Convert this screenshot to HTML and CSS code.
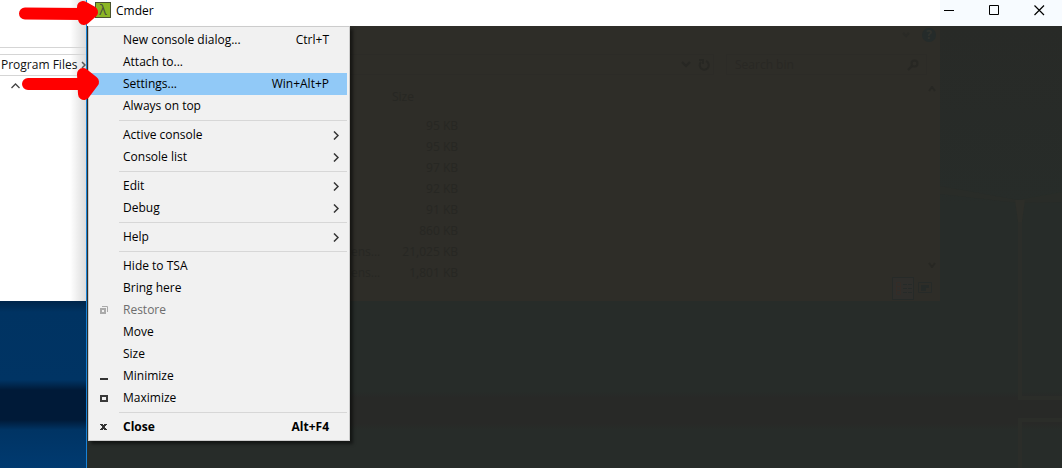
FILE: index.html
```html
<!DOCTYPE html>
<html lang="en">
<head>
<meta charset="UTF-8">
<meta name="viewport" content="width=device-width, initial-scale=1.0">
<title>Cmder</title>
<link rel="stylesheet" href="styles.css">
</head>
<body>
<div class="desktop">
	<div class="side">
		<div class="explorer">
			<div class="ribbon"></div>
			<div class="gap-bar"></div>
			<div class="path">
				<a href="#">Program Files</a>
				<svg width="5" height="8" viewBox="0 0 5 8"><path d="M1 1l3 3-3 3" fill="none" stroke="#555" stroke-width="1.500"/></svg>
			</div>
			<div class="sort">
				<svg width="9" height="6" viewBox="0 0 9 6"><path d="M.5 5l4-4 4 4" fill="none" stroke="#444" stroke-width="1.300"/></svg>
			</div>
		</div>
	</div>

	<div class="window">
		<header class="titlebar">
			<span class="logo">λ</span>
			<span class="name">Cmder</span>
			<div class="controls">
				<button type="button" aria-label="Minimize"><svg width="11" height="11"><path d="M0 5.500h10" stroke="#000"/></svg></button>
				<button type="button" aria-label="Maximize"><svg width="11" height="11"><path d="M.5 .5h9v9h-9z" fill="none" stroke="#000"/></svg></button>
				<button type="button" aria-label="Close"><svg width="11" height="11"><path d="M.5 .5l9.500 9.500M10 .5L.5 10" stroke="#000" stroke-width="1.200"/></svg></button>
			</div>
		</header>

		<main class="console">
			<!-- explorer window showing through the console -->
			<div class="ghost">
				<div class="ghost-top">
					<svg width="8" height="6" viewBox="0 0 8 6"><path d="M1 1l3 3 3-3" fill="none" stroke="#2a2a26" stroke-width="2"/></svg>
					<span class="help">?</span>
				</div>
				<div class="ghost-bar">
					<div class="address">
						<svg width="10" height="7" viewBox="0 0 10 7"><path d="M1 1l4 4 4-4" fill="none" stroke="#272723" stroke-width="2"/></svg>
						<svg width="12" height="12" viewBox="0 0 12 12"><path d="M8 2a4.500 4.500 0 1 1-5 1M1 1h4v4" fill="none" stroke="#272723" stroke-width="2"/></svg>
					</div>
					<div class="search">
						<input type="text" placeholder="Search bin" aria-label="Search bin">
						<svg width="12" height="12" viewBox="0 0 12 12"><circle cx="7.500" cy="4.500" r="3" fill="none" stroke="#272723" stroke-width="2"/><path d="M5 7l-4 4" stroke="#272723" stroke-width="2"/></svg>
					</div>
				</div>
				<div class="ghost-files">
					<table>
						<thead><tr><th></th><th class="size-head">Size</th></tr></thead>
						<tbody>
							<tr><td></td><td>95 KB</td></tr>
							<tr><td></td><td>95 KB</td></tr>
							<tr><td></td><td>97 KB</td></tr>
							<tr><td></td><td>92 KB</td></tr>
							<tr><td></td><td>91 KB</td></tr>
							<tr><td></td><td>860 KB</td></tr>
							<tr><td>ens...</td><td>21,025 KB</td></tr>
							<tr><td>ens...</td><td>1,801 KB</td></tr>
						</tbody>
					</table>
					<div class="scroll">
						<svg width="8" height="6" viewBox="0 0 8 6"><path d="M1 5l3-4 3 4" fill="none" stroke="#272723" stroke-width="2"/></svg>
						<svg width="8" height="6" viewBox="0 0 8 6"><path d="M1 1l3 4 3-4" fill="none" stroke="#272723" stroke-width="2"/></svg>
					</div>
				</div>
				<div class="views">
					<svg width="40" height="23" viewBox="0 0 40 23" fill="none">
						<path d="M.5 .5h21v22H.5z" fill="#2f2e2b" stroke="#262a28"/>
						<path d="M4.500 5.500h4v12h-4zM4.500 9.500h4M4.500 13.500h4" stroke="#352c27"/>
						<path d="M11 7.500h9M11 11.500h9M11 15.500h9" stroke="#262a28" stroke-dasharray="4 1"/>
						<path d="M26.500 5.500h13v10h-13z" stroke="#262a28"/>
						<path d="M29 8h8v3h-3v3h-5z" fill="#262a28"/>
					</svg>
				</div>
			</div>
			<svg class="wallpaper" width="122" height="442" viewBox="0 0 122 442">
				<path d="M0 160l78 14 44-8v10l-44 1L0 168z" fill="#292c28"/>
				<path d="M80 178v194h42M80 442v-48h42" fill="none" stroke="#2b2d29" stroke-width="4"/>
				<path d="M75 174h10l-3 22h-4z" fill="#2d2e29"/>
			</svg>
		</main>

		<ul class="menu">
			<li><button type="button"><i></i><span>New console dialog...</span><kbd>Ctrl+T</kbd></button></li>
			<li><button type="button"><i></i><span>Attach to...</span></button></li>
			<li><button type="button" class="active"><i></i><span>Settings...</span><kbd>Win+Alt+P</kbd></button></li>
			<li><button type="button"><i></i><span>Always on top</span></button></li>
			<li class="line"></li>
			<li><button type="button"><i></i><span>Active console</span><svg class="more" width="6" height="9"><path d="M1 .5l4 4-4 4"/></svg></button></li>
			<li><button type="button"><i></i><span>Console list</span><svg class="more" width="6" height="9"><path d="M1 .5l4 4-4 4"/></svg></button></li>
			<li class="line"></li>
			<li><button type="button"><i></i><span>Edit</span><svg class="more" width="6" height="9"><path d="M1 .5l4 4-4 4"/></svg></button></li>
			<li><button type="button"><i></i><span>Debug</span><svg class="more" width="6" height="9"><path d="M1 .5l4 4-4 4"/></svg></button></li>
			<li class="line"></li>
			<li><button type="button"><i></i><span>Help</span><svg class="more" width="6" height="9"><path d="M1 .5l4 4-4 4"/></svg></button></li>
			<li class="line"></li>
			<li><button type="button"><i></i><span>Hide to TSA</span></button></li>
			<li><button type="button"><i></i><span>Bring here</span></button></li>
			<li><button type="button" disabled><i><svg width="8" height="8"><path d="M1 3h4v4H1z" fill="none" stroke="#aaa" stroke-width="2"/><path d="M2 .5h5.500V6" fill="none" stroke="#aaa"/></svg></i><span>Restore</span></button></li>
			<li><button type="button"><i></i><span>Move</span></button></li>
			<li><button type="button"><i></i><span>Size</span></button></li>
			<li><button type="button"><i><svg width="8" height="8"><path d="M0 7h8" stroke="#333" stroke-width="2"/></svg></i><span>Minimize</span></button></li>
			<li><button type="button"><i><svg width="8" height="8"><path d="M1 2h6v5H1z" fill="none" stroke="#3a3a3a" stroke-width="2"/></svg></i><span>Maximize</span></button></li>
			<li class="line"></li>
			<li><button type="button" class="close"><i><svg width="8" height="8"><path d="M0 1h3v1h1V1h3v1H6v1H5v2h1v1h1v1H4V6H3v1H0V6h1V5h1V3H1V2H0z" fill="#333"/></svg></i><span>Close</span><kbd>Alt+F4</kbd></button></li>
		</ul>
	</div>

	<!-- hand drawn pointers -->
	<svg class="arrows" width="110" height="110" viewBox="0 0 110 110">
		<path d="M25 13.500L82 14M83 7l9 5-8 7z"/>
		<path d="M28 84h55M83 74l10 8-9 12z"/>
	</svg>
</div>
</body>
</html>
```
FILE: styles.css
```css
* {
	box-sizing: border-box;
}
body {
	margin: 0;
	font-family: "Open Sans", "Noto Sans", sans-serif;
	font-size: 12px;
	color: #000;
}
svg {
	display: block;
	flex: none;
}
button {
	border: 0;
	padding: 0;
	background: none;
	font: inherit;
	color: inherit;
}
.desktop {
	position: relative;
	display: grid;
	grid-template-columns: 86px 1fr;
	min-height: 100vh;
	overflow: hidden;
}

/* left part: explorer and wallpaper */
.side {
	background: linear-gradient(#00254a 301px, #003362 312px, #003464 380px, #001a38 390px, #001a38 420px, #003464 430px, #003a70);
}
.explorer {
	height: 301px;
	background: linear-gradient(to right, transparent 70px, rgba(0, 0, 0, 0.14)), #fff;
}
.ribbon {
	height: 48px;
	border-bottom: 1px solid #d5d5d5;
}
.gap-bar {
	height: 7px;
	border-bottom: 1px solid #d5d5d5;
}
.path {
	display: flex;
	align-items: center;
	justify-content: space-between;
	height: 21px;
	padding-left: 1px;
	border-bottom: 1px solid #d5d5d5;
	white-space: nowrap;
}
.path a {
	padding-bottom: 1px;
	color: #111;
	text-decoration: none;
}
.sort {
	padding: 7px 11px;
}

/* main window */
.window {
	position: relative;
	display: flex;
	flex-direction: column;
	border-left: 1px solid #1883d7;
}
.titlebar {
	display: flex;
	align-items: center;
	height: 26px;
	padding-left: 8px;
	background: linear-gradient(to left, #f7fbff 122px, #fff 122px);
}
.logo {
	width: 16px;
	height: 16px;
	margin-bottom: 6px;
	border: 1px solid #4a5230;
	background: #8cb524;
	color: #484d40;
	font-size: 14px;
	line-height: 14px;
	text-align: center;
}
.name {
	margin: 0 auto 5px 5px;
}
.controls {
	display: flex;
}
.controls button {
	display: flex;
	justify-content: center;
	width: 45px;
	padding-bottom: 6px;
}

.console {
	flex: 1;
	display: flex;
	align-items: flex-start;
	background: linear-gradient(#282a27, #272c29 180px, #272c29 366px, #282927 372px, #282927 398px, #272c29 404px);
}
.ghost {
	flex: 1;
	height: 275px;
	background: #2e2d28;
	color: #272723;
}
.ghost-top {
	display: flex;
	align-items: center;
	justify-content: flex-end;
	gap: 12px;
	height: 28px;
	padding: 0 4px 10px 0;
}
.help {
	width: 14px;
	height: 14px;
	border-radius: 50%;
	background: #252b2a;
	color: #31332e;
	font-weight: bold;
	line-height: 14px;
	text-align: center;
}
.ghost-bar {
	display: flex;
	gap: 12px;
	height: 21px;
	padding-right: 13px;
}
.address {
	flex: 1;
	display: flex;
	align-items: center;
	justify-content: flex-end;
	gap: 7px;
	padding-right: 3px;
	border: 1px solid #2c2b27;
}
.search {
	display: flex;
	align-items: center;
	width: 201px;
	padding: 0 7px 0 8px;
	border: 1px solid #2c2b27;
}
.search input {
	flex: 1;
	min-width: 0;
	border: 0;
	padding: 0;
	background: none;
	font: inherit;
}
.search input::placeholder {
	color: #292824;
	opacity: 1;
}
.ghost-files {
	display: flex;
	justify-content: space-between;
	height: 193px;
	padding: 11px 4px 0 264px;
}
.ghost table {
	border-collapse: collapse;
	table-layout: fixed;
	width: 107px;
}
.ghost th,
.ghost td {
	height: 21px;
	padding: 0;
	font-weight: normal;
	line-height: 20px;
	text-align: right;
	white-space: nowrap;
}
.ghost th {
	height: 29px;
	padding-bottom: 8px;
}
.ghost td:first-child,
.ghost .size-head {
	text-align: left;
}
.ghost th:first-child {
	width: 41px;
}
.scroll {
	display: flex;
	flex-direction: column;
	justify-content: space-between;
}
.views {
	display: flex;
	justify-content: flex-end;
	padding: 9px 8px 0 0;
}

/* system menu */
.menu {
	position: absolute;
	top: 26px;
	left: 1px;
	width: 262px;
	margin: 0;
	padding: 2px;
	border: 1px solid #ccc;
	background: #f1f1f1;
	box-shadow: 3px 3px 3px rgba(0, 0, 0, 0.5);
	list-style: none;
}
.menu button {
	display: flex;
	align-items: center;
	width: 100%;
	height: 22px;
	text-align: left;
}
.menu i {
	width: 32px;
	padding-left: 9px;
}
.menu span {
	flex: 1;
	padding-bottom: 2px;
}
.menu kbd {
	padding: 0 18px 2px 0;
	font: inherit;
}
.menu .active {
	background: #91c9f7;
}
.menu .close {
	font-weight: bold;
}
.menu button:disabled {
	color: #6d6d6d;
}
.more {
	margin-right: 8px;
	fill: none;
	stroke: #333;
	stroke-width: 1.5px;
}
.line {
	height: 1px;
	margin: 3px 0 3px 28px;
	background: #d7d7d7;
}

.arrows {
	position: absolute;
	top: 0;
	left: 0;
	fill: red;
	stroke: red;
	stroke-width: 12px;
	stroke-linecap: round;
	stroke-linejoin: round;
	pointer-events: none;
}
```
